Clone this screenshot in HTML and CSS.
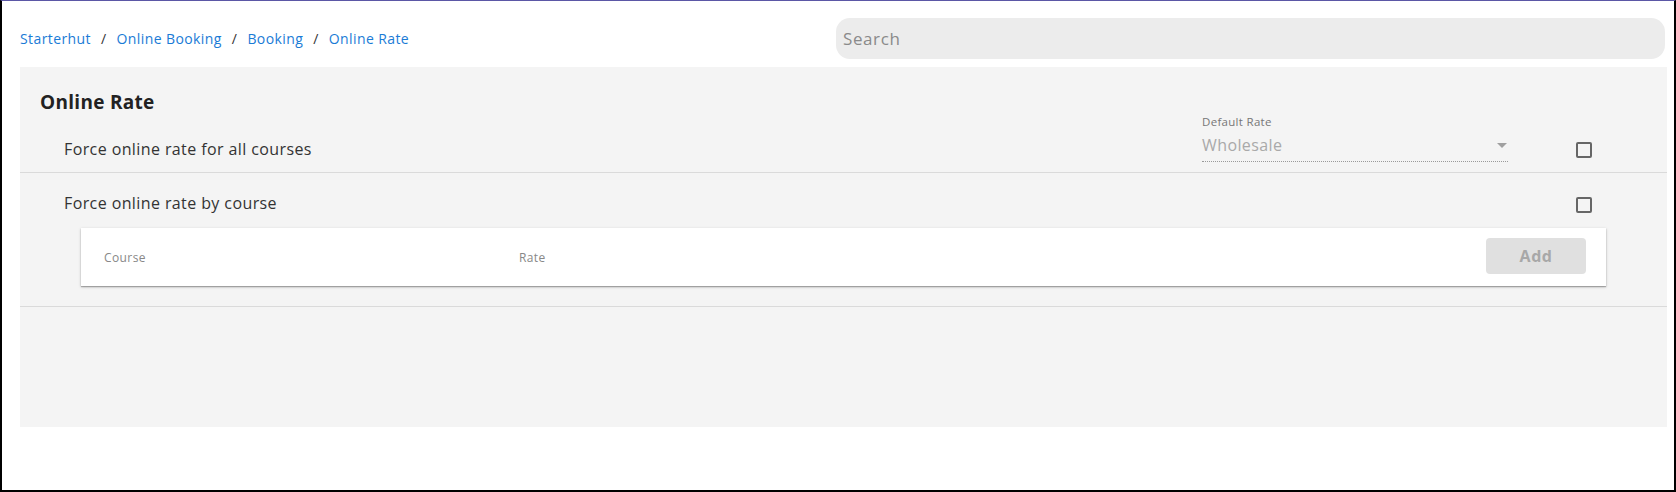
FILE: index.html
```html
<!DOCTYPE html>
<html lang="en">
<head>
  <meta charset="UTF-8" />
  <meta name="viewport" content="width=device-width, initial-scale=1" />
  <title>Online Rate</title>
  <link rel="stylesheet" href="styles.css">
</head>
<body>
  <div class="page">
    <header class="topbar">
      <nav class="crumbs">
        <a href="#">Starterhut</a>
        <span class="sep">/</span>
        <a href="#">Online Booking</a>
        <span class="sep">/</span>
        <a href="#">Booking</a>
        <span class="sep">/</span>
        <a href="#">Online Rate</a>
      </nav>
      <input class="search" type="text" placeholder="Search">
    </header>

    <main class="panel">
      <h2 class="panel-title">Online Rate</h2>

      <div class="row row-all">
        <span class="row-label">Force online rate for all courses</span>
        <div class="select">
          <label class="select-label">Default Rate</label>
          <div class="select-value">
            <span>Wholesale</span>
            <span class="caret"></span>
          </div>
        </div>
        <span class="checkbox"></span>
      </div>

      <div class="row row-course">
        <div class="row-head">
          <span class="row-label">Force online rate by course</span>
          <span class="checkbox"></span>
        </div>
        <div class="card">
          <span class="col col-course">Course</span>
          <span class="col col-rate">Rate</span>
          <button class="btn-add" disabled>Add</button>
        </div>
      </div>
    </main>
  </div>
</body>
</html>
```

FILE: styles.css
```css
html, body {
  margin: 0;
  padding: 0;
}
body {
  font-family: 'Open Sans', 'Liberation Sans', sans-serif;
  background: #fff;
  color: #333;
}
.page {
  height: 492px;
  box-sizing: border-box;
  border: 2px solid #000;
  border-top: 1px solid #5b57a6;
}
.topbar {
  display: flex;
  align-items: center;
  padding: 17px 9px 0 18px;
}
.crumbs {
  font-size: 14px;
  letter-spacing: 0.4px;
  line-height: 20px;
}
.crumbs a {
  color: #1a7bd6;
  text-decoration: none;
}
.crumbs .sep {
  color: #333;
  margin: 0 6px;
}
.search {
  margin-left: auto;
  width: 829px;
  height: 41px;
  box-sizing: border-box;
  border: none;
  border-radius: 14px;
  background: #ececec;
  padding: 0 7px;
  font-family: inherit;
  font-size: 17px;
  letter-spacing: 0.6px;
  outline: none;
}
.search::placeholder {
  color: #8a8a8a;
}
.panel {
  display: block;
  margin: 8px 7px 0 18px;
  height: 360px;
  background: #f4f4f4;
  padding-top: 24px;
  box-sizing: border-box;
}
.panel-title {
  margin: 0;
  padding-left: 20px;
  font-size: 19px;
  line-height: 23px;
  font-weight: 700;
  letter-spacing: 0.3px;
  color: #222;
}
.row {
  border-bottom: 1px solid #dadada;
}
.row-label {
  font-size: 16px;
  letter-spacing: 0.4px;
  line-height: 20px;
  color: #333;
}
.row-all {
  display: flex;
  align-items: flex-end;
  height: 59px;
  box-sizing: border-box;
  padding: 0 0 10px 44px;
}
.row-all .row-label {
  flex: 1;
  margin-bottom: 3px;
}
.select {
  width: 306px;
  margin-right: 68px;
}
.select-label {
  display: block;
  font-size: 11.5px;
  letter-spacing: 0.3px;
  line-height: 14px;
  color: #777;
  margin-bottom: 5px;
}
.select-value {
  display: flex;
  align-items: center;
  justify-content: space-between;
  font-size: 16px;
  letter-spacing: 0.4px;
  line-height: 22px;
  color: #a9a9a9;
  padding-bottom: 5px;
  border-bottom: 1px dotted #9a9a9a;
}
.caret {
  width: 0;
  height: 0;
  border-left: 5px solid transparent;
  border-right: 5px solid transparent;
  border-top: 5px solid #a0a0a0;
  margin-right: 1px;
}
.checkbox {
  width: 16px;
  height: 16px;
  box-sizing: border-box;
  border: 2px solid #666;
  border-radius: 2px;
  margin-right: 75px;
  flex-shrink: 0;
}
.row-all .checkbox {
  margin-bottom: 4px;
}
.row-course {
  padding: 20px 0 20px;
}
.row-head {
  display: flex;
  align-items: flex-start;
  padding-left: 44px;
}
.row-head .row-label {
  flex: 1;
}
.row-head .checkbox {
  margin-top: 4px;
}
.card {
  display: flex;
  align-items: center;
  height: 58px;
  box-sizing: border-box;
  margin: 15px 61px 0 61px;
  padding: 0 20px 0 23px;
  background: #fff;
  box-shadow: 0 1px 3px rgba(0, 0, 0, 0.2), 0 1px 1px rgba(0, 0, 0, 0.25);
}
.col {
  font-size: 12px;
  letter-spacing: 0.4px;
  color: #888;
}
.col-course {
  width: 415px;
}
.col-rate {
  flex: 1;
}
.btn-add {
  width: 100px;
  height: 36px;
  border: none;
  border-radius: 4px;
  background: #e0e0e0;
  color: #a8a8a8;
  font-family: inherit;
  font-size: 16px;
  font-weight: 700;
  letter-spacing: 0.5px;
  margin-top: -2px;
}
```
